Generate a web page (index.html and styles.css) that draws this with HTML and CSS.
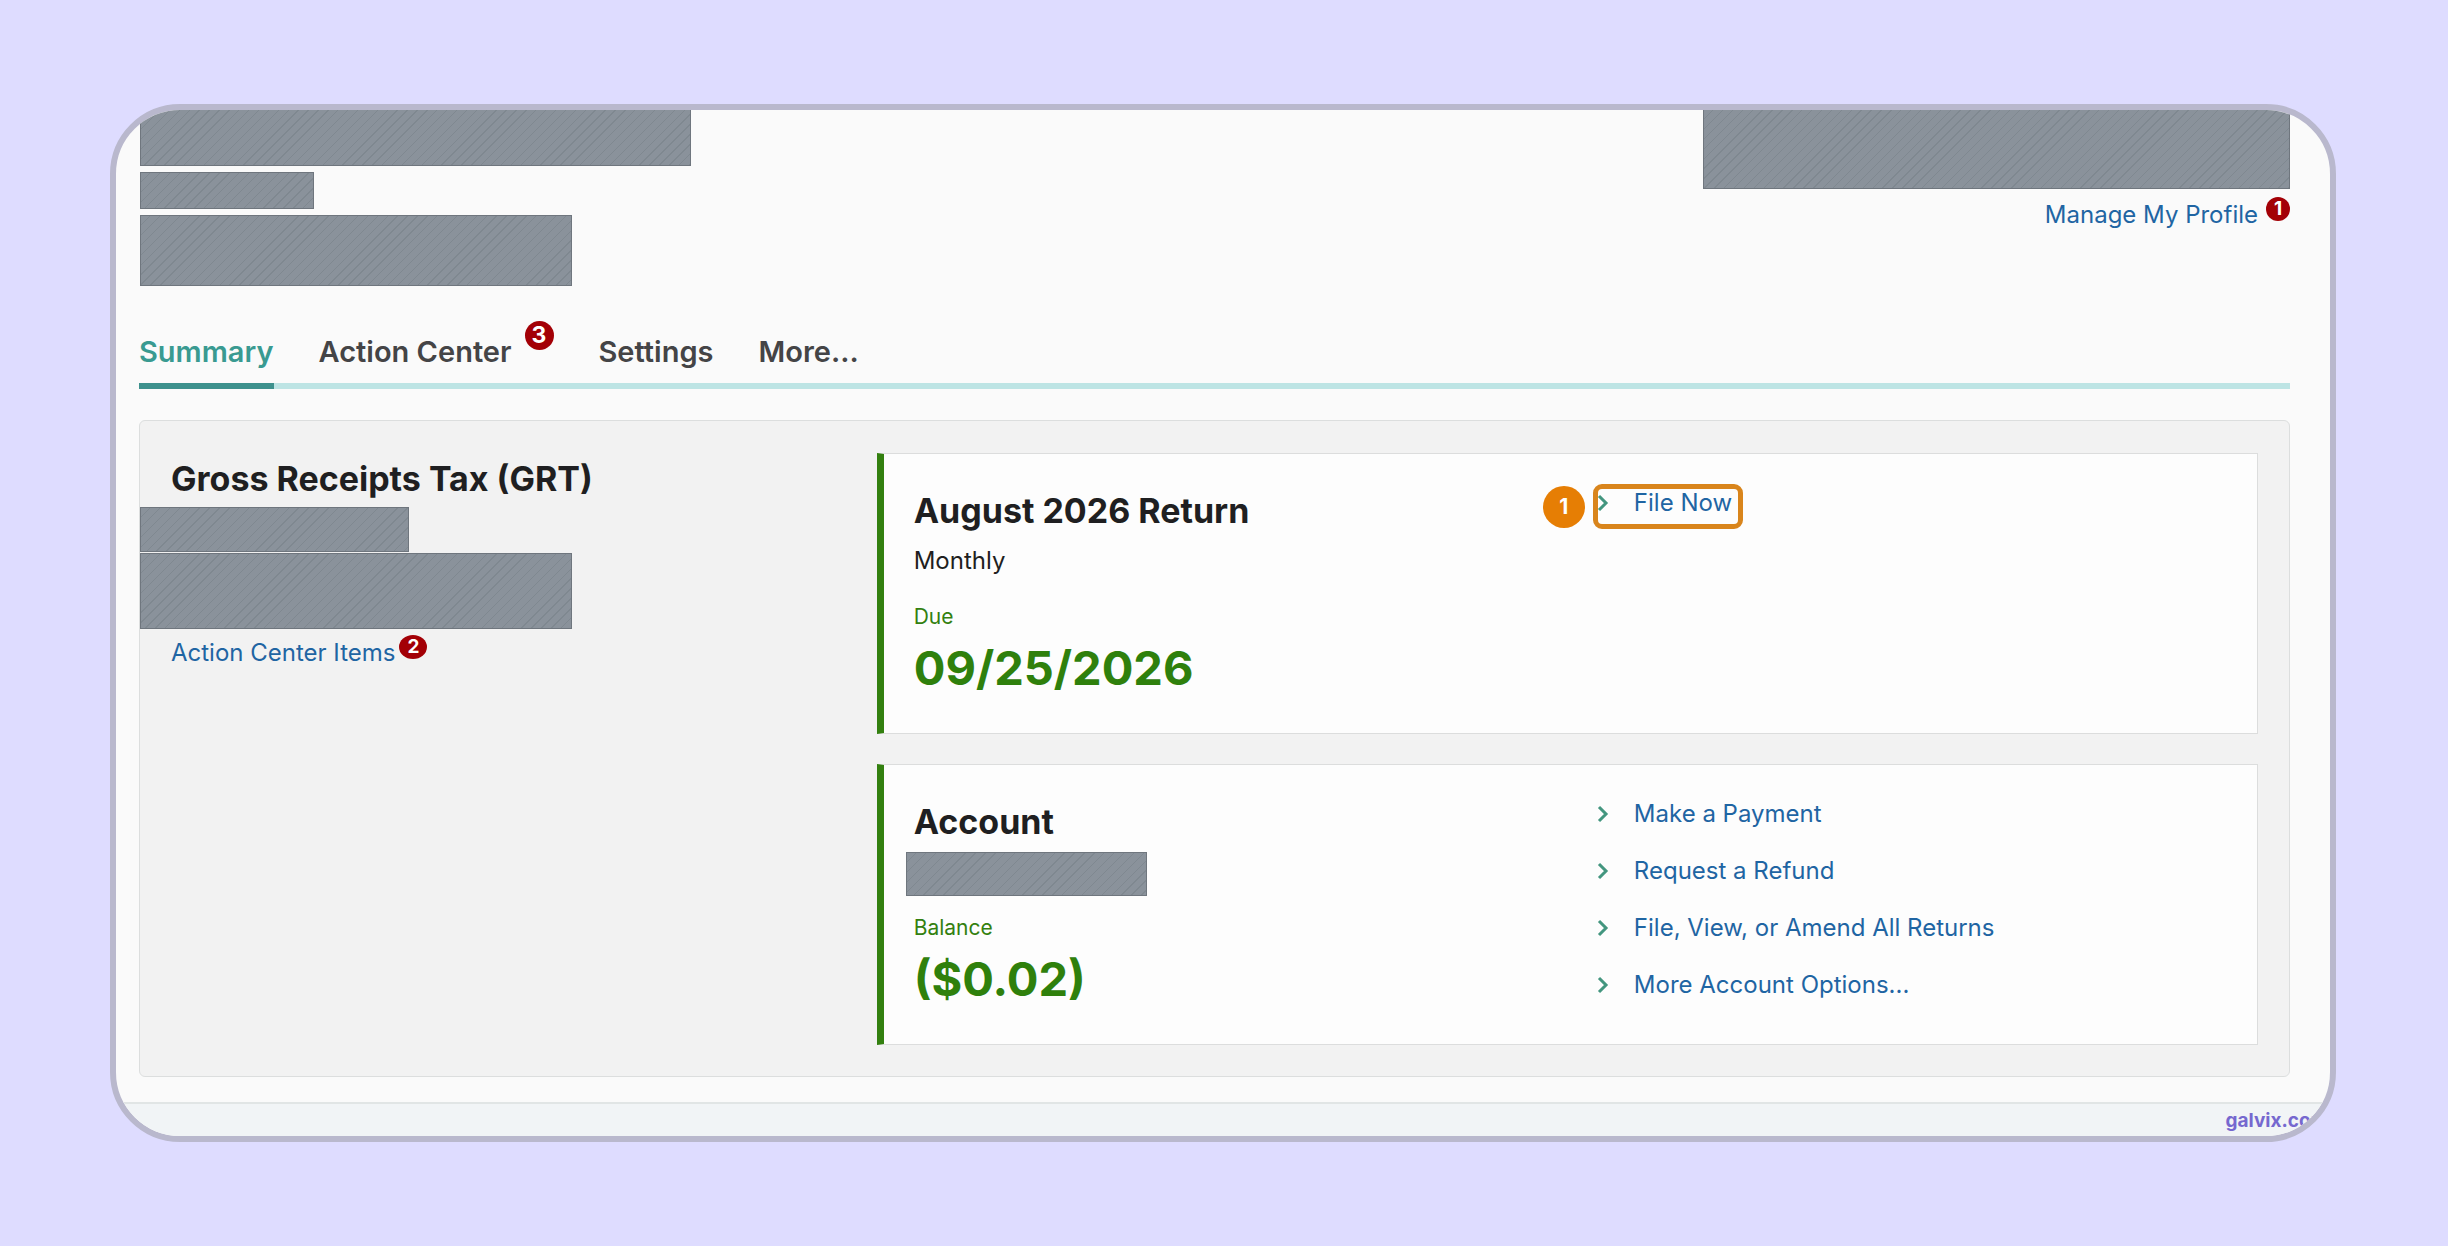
FILE: index.html
```html
<!DOCTYPE html>
<html lang="en">
<head>
    <meta charset="UTF-8">
    <meta name="viewport" content="width=device-width, initial-scale=1.0">
    <title>Gross Receipts Tax - Summary</title>
    <link rel="stylesheet" href="styles.css">
</head>
<body>
    <div class="frame">
        <header class="header">
            <div class="taxpayer">
                <div class="redacted taxpayer-name"></div>
                <div class="redacted taxpayer-id"></div>
                <div class="redacted taxpayer-address"></div>
            </div>
            <div class="profile">
                <div class="redacted profile-name"></div>
                <a class="link profile-link" href="#profile">Manage My Profile <span class="badge badge-small">1</span></a>
            </div>
        </header>

        <nav class="tabs">
            <a class="tab active" href="#summary">Summary</a>
            <a class="tab tab-with-badge" href="#actions">Action Center <span class="badge badge-tab">3</span></a>
            <a class="tab" href="#settings">Settings</a>
            <a class="tab" href="#more">More...</a>
        </nav>

        <main class="panel">
            <section class="tax">
                <h2 class="tax-title">Gross Receipts Tax (GRT)</h2>
                <div class="redacted tax-id"></div>
                <div class="redacted tax-address"></div>
                <a class="link tax-link" href="#items">Action Center Items <span class="badge">2</span></a>
            </section>

            <div class="cards">
                <section class="card">
                    <div>
                        <h2>August 2026 Return</h2>
                        <p class="period">Monthly</p>
                        <p class="label">Due</p>
                        <p class="value">09/25/2026</p>
                    </div>
                    <ul class="links">
                        <li class="highlighted">
                            <span class="step">1</span>
                            <svg class="chevron" viewBox="0 0 12 18"><path d="M2 2l7 7-7 7"/></svg>
                            <a class="link" href="#file">File Now</a>
                        </li>
                    </ul>
                </section>

                <section class="card">
                    <div>
                        <h2>Account</h2>
                        <div class="redacted account-id"></div>
                        <p class="label">Balance</p>
                        <p class="value">($0.02)</p>
                    </div>
                    <ul class="links">
                        <li>
                            <svg class="chevron" viewBox="0 0 12 18"><path d="M2 2l7 7-7 7"/></svg>
                            <a class="link" href="#payment">Make a Payment</a>
                        </li>
                        <li>
                            <svg class="chevron" viewBox="0 0 12 18"><path d="M2 2l7 7-7 7"/></svg>
                            <a class="link" href="#refund">Request a Refund</a>
                        </li>
                        <li>
                            <svg class="chevron" viewBox="0 0 12 18"><path d="M2 2l7 7-7 7"/></svg>
                            <a class="link" href="#returns">File, View, or Amend All Returns</a>
                        </li>
                        <li>
                            <svg class="chevron" viewBox="0 0 12 18"><path d="M2 2l7 7-7 7"/></svg>
                            <a class="link" href="#options">More Account Options...</a>
                        </li>
                    </ul>
                </section>
            </div>
        </main>

        <footer class="footer">galvix.com</footer>
    </div>
</body>
</html>
```
FILE: styles.css
```css
* {
    box-sizing: border-box;
}
body {
    margin: 0;
    padding: 104px 112px 104px 110px;
    background: #dedcff;
    color: #1f1f21;
    font-family: Inter, "Liberation Sans", sans-serif;
    font-size: 24px;
    line-height: 30px;
}
h2, p, ul {
    margin: 0;
    padding: 0;
}
h2 {
    font-size: 34px;
    font-weight: 700;
    line-height: 46px;
}
.frame {
    background: #fafafa;
    border: 6px solid #b9b8cd;
    border-radius: 70px;
    overflow: hidden;
}
.link {
    color: #1f65a3;
    text-decoration: none;
}

/* hatched blocks over private details */
.redacted {
    background: repeating-linear-gradient(135deg, #8a929b 0, #8a929b 6px, #7f8890 6px, #7f8890 7px);
    border: 1px solid #6f767e;
}
.taxpayer-name {
    width: 551px;
    height: 56px;
    border-top: 0;
}
.taxpayer-id {
    width: 174px;
    height: 37px;
}
.taxpayer-address {
    width: 432px;
    height: 71px;
}
.profile-name {
    width: 587px;
    height: 79px;
    border-top: 0;
}
.tax-id {
    width: 269px;
    height: 45px;
    margin: 5px 0 1px;
}
.tax-address {
    width: 432px;
    height: 76px;
    margin-bottom: 9px;
}
.account-id {
    width: 241px;
    height: 44px;
    margin: 7px 0 19px -8px;
}

/* counters sit above the end of their link */
.badge {
    position: absolute;
    top: -3px;
    right: 0;
    width: 28px;
    height: 24px;
    border-radius: 50%;
    background: #a30006;
    color: #fff;
    font-size: 19px;
    font-weight: 700;
    line-height: 24px;
    text-align: center;
}
.badge-small {
    width: 24px;
}
.badge-tab {
    top: -12px;
    width: 29px;
    height: 29px;
    font-size: 23px;
    line-height: 29px;
}
.profile-link, .tax-link, .tab-with-badge {
    position: relative;
    display: inline-block;
}
.profile-link {
    padding-right: 32px;
}

.header {
    display: flex;
    justify-content: space-between;
    padding: 0 40px 0 24px;
}
.taxpayer {
    display: flex;
    flex-direction: column;
    gap: 6px;
}
.profile {
    display: flex;
    flex-direction: column;
    align-items: flex-end;
    gap: 11px;
}

.tabs {
    display: flex;
    gap: 45px;
    height: 56px;
    margin: 47px 40px 31px 23px;
    border-bottom: 6px solid #bde4e4;
    font-size: 29px;
    font-weight: 600;
    line-height: 38px;
}
.tab {
    height: 56px;
    color: #444446;
    text-decoration: none;
    white-space: nowrap;
}
.tab.active {
    color: #399a91;
    border-bottom: 6px solid #3d918d;
}
.tab-with-badge {
    padding-right: 42px;
}

.panel {
    display: grid;
    grid-template-columns: 8fr 15fr;
    margin: 0 40px 25px 23px;
    padding: 32px 31px 31px 0;
    background: #f2f2f2;
    border: 1px solid #dcdede;
    border-radius: 6px;
}
.tax {
    padding-top: 3px;
}
.tax-title {
    padding-left: 31px;
}
.tax-link {
    margin-left: 31px;
    padding-right: 32px;
}
.cards {
    display: grid;
    gap: 30px;
}
.card {
    display: grid;
    grid-template-columns: 1fr 1fr;
    gap: 46px;
    padding: 34px 31px 35px 30px;
    background: #fdfdfd;
    border: 1px solid #dcdddd;
    border-left: 7px solid #33800f;
}
.period {
    margin: 12px 0 28px;
}
.label {
    margin-bottom: 8px;
    color: #33800f;
    font-size: 21px;
    line-height: 26px;
}
.value {
    color: #2f800c;
    font-size: 47px;
    font-weight: 700;
    line-height: 60px;
}
.links {
    display: flex;
    flex-direction: column;
    gap: 27px;
    list-style: none;
}
.links li {
    display: flex;
    align-items: center;
    gap: 25px;
    padding-left: 4px;
}
.chevron {
    width: 12px;
    height: 18px;
    fill: none;
    stroke: #43967f;
    stroke-width: 3;
}

/* walkthrough marker */
.links .highlighted {
    position: relative;
    width: 150px;
    white-space: nowrap;
}
.highlighted::after {
    content: "";
    position: absolute;
    inset: -4px 0 -11px;
    border: 5px solid #d9851c;
    border-radius: 9px;
    pointer-events: none;
}
.step {
    position: absolute;
    top: -2px;
    left: -50px;
    width: 42px;
    height: 42px;
    border-radius: 50%;
    background: #e67e04;
    color: #fff;
    font-size: 21px;
    font-weight: 700;
    line-height: 42px;
    text-align: center;
}

.footer {
    padding: 2px 2px 0 0;
    background: #f1f4f6;
    border-top: 2px solid #e1e5e5;
    color: #7668cf;
    font-size: 19px;
    font-weight: 700;
    text-align: right;
}
```
